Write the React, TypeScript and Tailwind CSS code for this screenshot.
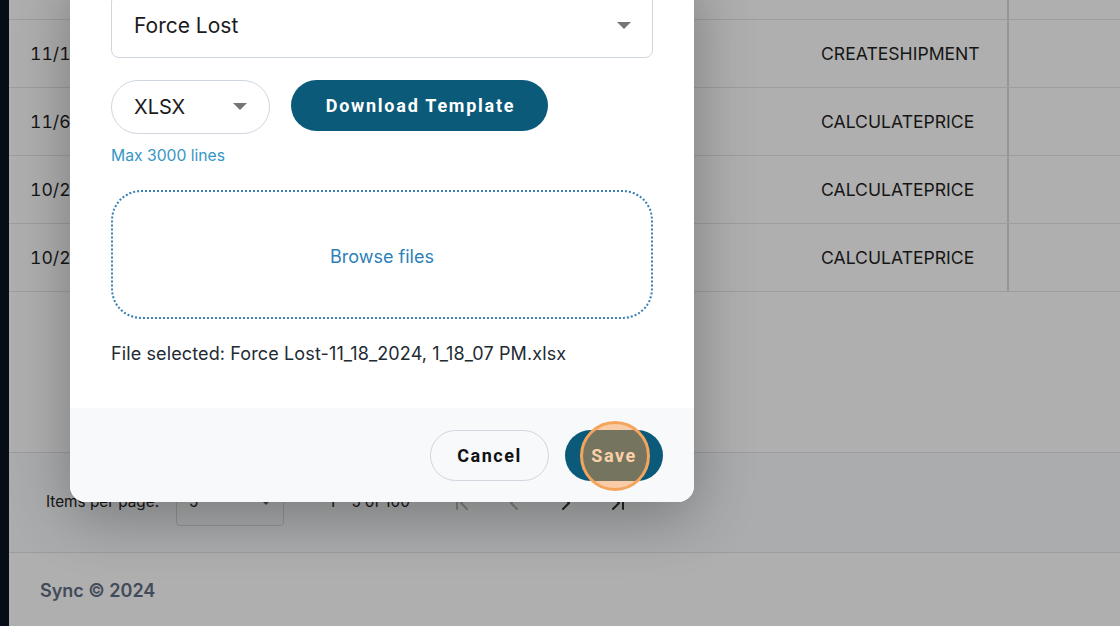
import React from "react";
import { ChevronFirst, ChevronLast, ChevronLeft, ChevronRight } from "lucide-react";

const rows = [
  { date: "", type: "" },
  { date: "11/18/2024", type: "CREATESHIPMENT" },
  { date: "11/6/2024", type: "CALCULATEPRICE" },
  { date: "10/29/2024", type: "CALCULATEPRICE" },
  { date: "10/28/2024", type: "CALCULATEPRICE" },
];

function Caret({ className = "" }: { className?: string }) {
  return (
    <svg width="14" height="8" viewBox="0 0 14 8" className={className}>
      <path d="M0 0 L14 0 L7 7 Z" fill="#757575" />
    </svg>
  );
}

export default function App() {
  const inter = { fontFamily: "Inter, 'Noto Sans', sans-serif" };
  return (
    <div className="relative w-[1120px] h-[626px] overflow-hidden flex bg-white" style={inter}>
      <div className="w-[9px] shrink-0 bg-[#0b1321]" />
      <div className="flex-1 flex flex-col min-w-0">
        {/* table */}
        <div className="mt-[-48px] flex flex-col">
          {rows.map((r, i) => (
            <div key={i} className="h-[68px] flex border-b border-[#e6e7ea] text-[17.6px] text-[#1f1f1f]">
              <div className="w-[812px] pl-[21px] pt-[1px] flex items-center tabular-nums">{r.date}</div>
              <div className="w-[186px] pt-[2px] flex items-center">{r.type}</div>
              <div className="flex-1 border-l-2 border-[#d3dae3]" />
            </div>
          ))}
        </div>
        <div className="h-[160px] shrink-0" />
        {/* paginator */}
        <div className="h-[101px] shrink-0 border-y border-[#e2e3e8] bg-[#fafbfd] flex items-center pl-[37px] text-[15.3px] text-[#222]">
          <span>Items per page:</span>
          <div className="ml-[17px] w-[108px] h-[47px] border border-[#d6d8dc] rounded-[4px] flex items-center justify-between px-[12px]">
            <span>5</span>
            <svg width="10" height="6" viewBox="0 0 10 6"><path d="M0 0 L10 0 L5 5 Z" fill="#666" /></svg>
          </div>
          <span className="ml-[45px]">1 – 5 of 100</span>
          <div className="ml-[40px] flex items-center gap-[28px]">
            <ChevronFirst size={24} color="#bbb" />
            <ChevronLeft size={24} color="#bbb" />
            <ChevronRight size={24} color="#333" />
            <ChevronLast size={24} color="#333" />
          </div>
        </div>
        {/* footer */}
        <div className="flex-1 flex items-center pl-[31px] pt-[2px] text-[18px] font-semibold text-[#5f6e84]">
          Sync © 2024
        </div>
      </div>

      {/* backdrop */}
      <div className="absolute inset-0 bg-black/[0.315]" />

      {/* modal */}
      <div className="absolute left-[70px] bottom-[124px] w-[624px] bg-white rounded-[16px] overflow-hidden shadow-[0_14px_60px_rgba(0,0,0,0.3)] flex flex-col">
        <div className="px-[41px] pt-[24px] pb-[42px] flex flex-col">
          <div className="h-[64px] border border-[#cfd6de] rounded-[8px] flex items-center justify-between pl-[22px] pr-[21px] text-[21px] text-[#1b1b1b]">
            <span>Force Lost</span>
            <Caret />
          </div>
          <div className="mt-[22px] flex items-start gap-[21px]">
            <div className="w-[159px] h-[54px] border border-[#cfd6de] rounded-full flex items-center justify-between pl-[22px] pr-[22px] text-[20px] text-[#1b1b1b]">
              <span>XLSX</span>
              <Caret />
            </div>
            <div
              className="h-[51px] w-[257px] pl-[2px] rounded-full bg-[#0c5a7a] text-white text-[18px] font-bold tracking-[1.75px] flex items-center justify-center"
              style={{ fontFamily: "Roboto, sans-serif" }}
            >
              Download Template
            </div>
          </div>
          <div className="mt-[12px] h-[20px] leading-[20px] text-[15.7px] text-[#3596c4]">Max 3000 lines</div>
          <div className="mt-[24px] h-[129px] rounded-[30px] border-2 border-dotted border-[#3a80b3] flex items-center justify-center pt-[4px] text-[18px] text-[#2d7fb8]">
            Browse files
          </div>
          <div className="mt-[23px] h-[24px] leading-[24px] text-[18px] tracking-[0.12px] text-[#222a33]">
            File selected: Force Lost-11_18_2024, 1_18_07 PM.xlsx
          </div>
        </div>
        <div className="h-[94px] bg-[#f7f9fb] flex items-center justify-end pr-[31px] gap-[16px]" style={{ fontFamily: "Roboto, sans-serif" }}>
          <div className="w-[119px] h-[51px] rounded-full border border-[#cfd6de] flex items-center justify-center text-[18px] font-bold tracking-[1.5px] text-[#111]">
            Cancel
          </div>
          <div className="relative w-[98px] h-[51px] rounded-full bg-[#0c5a7a] flex items-center justify-center text-[18px] font-bold tracking-[1.5px] text-white">
            Save
            <div className="absolute left-[15px] top-[-9px] w-[70px] h-[70px] rounded-full border-[3px] border-[#f5a45c] bg-[#f7953e]/[0.45]" />
          </div>
        </div>
      </div>
    </div>
  );
}
